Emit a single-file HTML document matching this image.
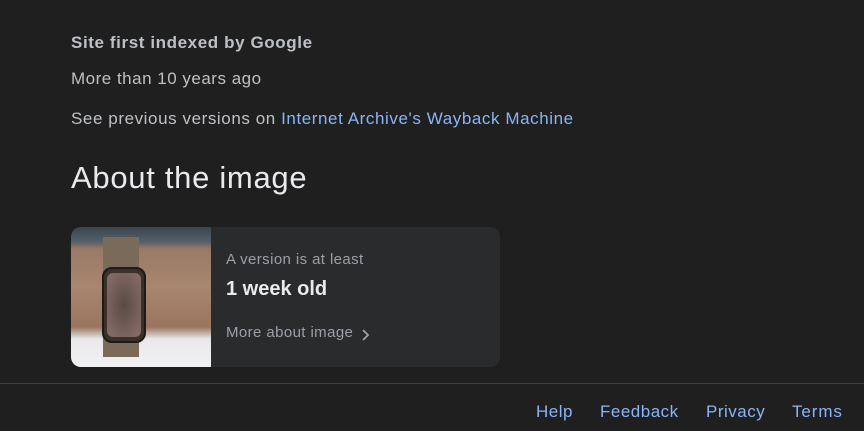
<!DOCTYPE html>
<html><head><style>
body{margin:0;background:#1f1f1f;width:864px;height:431px;overflow:hidden;font-family:"Liberation Sans",Arial,sans-serif;position:relative}
.t{position:absolute;white-space:nowrap}
a{color:#8ab4f8;text-decoration:none}
</style></head><body>
<div class="t" style="left:71px;top:33px;font-size:17px;font-weight:bold;color:#bdc1c6;letter-spacing:0.6px">Site first indexed by Google</div>
<div class="t" style="left:71px;top:69px;font-size:17px;color:#bdc1c6;letter-spacing:0.5px">More than 10 years ago</div>
<div class="t" style="left:71px;top:109px;font-size:17px;color:#bdc1c6;letter-spacing:0.58px">See previous versions on <a>Internet Archive's Wayback Machine</a></div>
<div class="t" style="left:71px;top:160px;font-size:31px;color:#e8eaed;letter-spacing:0.7px">About the image</div>
<div style="position:absolute;left:71px;top:227px;width:429px;height:140px;background:#2a2b2d;border-radius:10px;overflow:hidden">
 <div style="position:absolute;left:0;top:0;width:140px;height:140px;background:linear-gradient(#3a4550 0,#55606a 15px,#9a7a66 22px,#a88670 60px,#9a7560 100px,#e8e8ea 112px,#f2f2f4 140px)">
  <div style="position:absolute;left:32px;top:10px;width:36px;height:120px;background:#7a6a5a"></div>
  <div style="position:absolute;left:31px;top:40px;width:44px;height:76px;background:#3a302c;border-radius:10px;border:2px solid #1f1a18;box-sizing:border-box"></div>
  <div style="position:absolute;left:36px;top:46px;width:34px;height:64px;background:radial-gradient(#5a4a45,#8a706a);border-radius:6px"></div>
 </div>
 <div class="t" style="left:155px;top:24px;font-size:15px;color:#9aa0a6;letter-spacing:0.4px">A version is at least</div>
 <div class="t" style="left:155px;top:51px;font-size:20px;font-weight:bold;color:#e8eaed">1 week old</div>
 <div class="t" style="left:155px;top:97px;font-size:15px;color:#9aa0a6;letter-spacing:0.4px">More about image</div>
 <svg style="position:absolute;left:289px;top:101px" width="10" height="14" viewBox="0 0 10 14"><path d="M3 2l5 5-5 5" fill="none" stroke="#9aa0a6" stroke-width="1.8"/></svg>
</div>
<div style="position:absolute;left:0;top:383px;width:864px;height:1px;background:#3c4043"></div>
<a class="t" style="left:536px;top:402px;font-size:17px;letter-spacing:0.5px">Help</a>
<a class="t" style="left:600px;top:402px;font-size:17px;letter-spacing:0.5px">Feedback</a>
<a class="t" style="left:706px;top:402px;font-size:17px;letter-spacing:0.5px">Privacy</a>
<a class="t" style="left:792px;top:402px;font-size:17px;letter-spacing:0.9px">Terms</a>
</body></html>
